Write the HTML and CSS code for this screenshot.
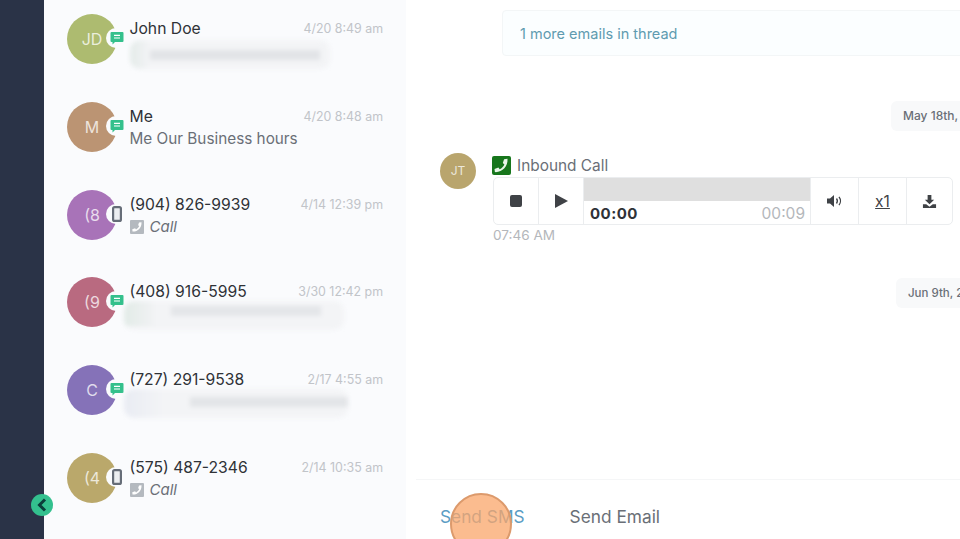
FILE: index.html
```html
<!DOCTYPE html>
<html>
  <head>
    <meta charset="utf-8" />
    <title>Conversations</title>
    <link rel="stylesheet" href="styles.css">
  </head>
  <body>
    <div class="app">
      <aside class="sidebar">
        <button class="collapse" type="button" aria-label="Collapse">
          <svg viewBox="0 0 12 14" width="12" height="14"><path d="M9 1.500 3.500 7 9 12.500" fill="none" stroke="#0b3d3a" stroke-width="3"/></svg>
        </button>
      </aside>

      <section class="list">
        <div class="row">
          <div class="avatar green">JD
            <span class="badge"><svg viewBox="0 0 14 14" width="14" height="14"><path d="M1.500 1h11a1 1 0 0 1 1 1v8a1 1 0 0 1-1 1H5l-2.500 2.500V11h-1a1 1 0 0 1-1-1V2a1 1 0 0 1 1-1z" fill="#34c08c"/><path d="M4 4.400h6M4 7h6" stroke="#fff" stroke-width="1.200"/></svg></span>
          </div>
          <div class="info">
            <div class="top"><span class="name">John Doe</span><span class="time">4/20 8:49 am</span></div>
            <div class="blur blur-a"></div>
          </div>
        </div>

        <div class="row">
          <div class="avatar brown">M
            <span class="badge"><svg viewBox="0 0 14 14" width="14" height="14"><path d="M1.500 1h11a1 1 0 0 1 1 1v8a1 1 0 0 1-1 1H5l-2.500 2.500V11h-1a1 1 0 0 1-1-1V2a1 1 0 0 1 1-1z" fill="#34c08c"/><path d="M4 4.400h6M4 7h6" stroke="#fff" stroke-width="1.200"/></svg></span>
          </div>
          <div class="info">
            <div class="top"><span class="name">Me</span><span class="time">4/20 8:48 am</span></div>
            <div class="preview">Me Our Business hours</div>
          </div>
        </div>

        <div class="row">
          <div class="avatar purple">(8
            <span class="badge"><svg viewBox="0 0 10 16" width="10" height="16"><rect x="1.100" y="1.100" width="7.800" height="13.800" rx="1.500" fill="#eceef1" stroke="#666d78" stroke-width="2.200"/></svg></span>
          </div>
          <div class="info">
            <div class="top"><span class="name">(904) 826-9939</span><span class="time">4/14 12:39 pm</span></div>
            <div class="preview call">
              <svg viewBox="0 0 14 14" width="14" height="14"><rect width="14" height="14" rx="1" fill="#b4b9bf"/><path d="M11.500 2.200c.4 5.400-3.800 9.700-9 9.400l-.2-2.400 2.800-.9.900 1.200c1.400-.7 2.600-1.900 3.300-3.400l-1.200-.9.900-2.800z" fill="#fff"/></svg>
              <em>Call</em>
            </div>
          </div>
        </div>

        <div class="row">
          <div class="avatar rose">(9
            <span class="badge"><svg viewBox="0 0 14 14" width="14" height="14"><path d="M1.500 1h11a1 1 0 0 1 1 1v8a1 1 0 0 1-1 1H5l-2.500 2.500V11h-1a1 1 0 0 1-1-1V2a1 1 0 0 1 1-1z" fill="#34c08c"/><path d="M4 4.400h6M4 7h6" stroke="#fff" stroke-width="1.200"/></svg></span>
          </div>
          <div class="info">
            <div class="top"><span class="name">(408) 916-5995</span><span class="time">3/30 12:42 pm</span></div>
            <div class="blur blur-b"></div>
          </div>
        </div>

        <div class="row">
          <div class="avatar violet">C
            <span class="badge"><svg viewBox="0 0 14 14" width="14" height="14"><path d="M1.500 1h11a1 1 0 0 1 1 1v8a1 1 0 0 1-1 1H5l-2.500 2.500V11h-1a1 1 0 0 1-1-1V2a1 1 0 0 1 1-1z" fill="#34c08c"/><path d="M4 4.400h6M4 7h6" stroke="#fff" stroke-width="1.200"/></svg></span>
          </div>
          <div class="info">
            <div class="top"><span class="name">(727) 291-9538</span><span class="time">2/17 4:55 am</span></div>
            <div class="blur blur-c"></div>
          </div>
        </div>

        <div class="row">
          <div class="avatar khaki">(4
            <span class="badge"><svg viewBox="0 0 10 16" width="10" height="16"><rect x="1.100" y="1.100" width="7.800" height="13.800" rx="1.500" fill="#eceef1" stroke="#666d78" stroke-width="2.200"/></svg></span>
          </div>
          <div class="info">
            <div class="top"><span class="name">(575) 487-2346</span><span class="time">2/14 10:35 am</span></div>
            <div class="preview call">
              <svg viewBox="0 0 14 14" width="14" height="14"><rect width="14" height="14" rx="1" fill="#b4b9bf"/><path d="M11.500 2.200c.4 5.400-3.800 9.700-9 9.400l-.2-2.400 2.800-.9.900 1.200c1.400-.7 2.600-1.900 3.300-3.400l-1.200-.9.900-2.800z" fill="#fff"/></svg>
              <em>Call</em>
            </div>
          </div>
        </div>
      </section>

      <main class="thread">
        <div class="messages">
          <div class="more-emails">1 more emails in thread</div>

          <div class="date-chip date-may">May 18th,</div>

          <div class="message">
            <div class="msg-avatar">JT</div>
            <div class="msg-body">
              <div class="msg-title">
                <svg viewBox="0 0 19 19" width="19" height="19"><rect width="19" height="19" rx="2" fill="#17761c"/><path d="M15.500 2.800c.6 7.600-5.400 13.800-12.600 13.300l-.4-3.200 3.900-1.300 1.300 1.600c2-1 3.700-2.700 4.700-4.800l-1.600-1.300 1.300-3.900z" fill="#e8f5e8"/></svg>
                <span>Inbound Call</span>
              </div>
              <div class="player">
                <div class="cell cell-stop"><span class="stop"></span></div>
                <div class="cell cell-play"><span class="play"></span></div>
                <div class="progress">
                  <div class="bar"></div>
                  <div class="times"><b>00:00</b><span>00:09</span></div>
                </div>
                <div class="cell cell-wide">
                  <svg viewBox="0 0 18 16" width="18" height="16"><path d="M1 5.500h3L8 2v12l-4-3.500H1z" fill="#3f4246"/><path d="M10.500 5.500c1 1.400 1 3.600 0 5M13 3.800c1.900 2.400 1.900 6 0 8.400" fill="none" stroke="#3f4246" stroke-width="1.300"/></svg>
                </div>
                <div class="cell cell-wide"><span class="speed">x1</span></div>
                <div class="cell cell-wide">
                  <svg viewBox="0 0 16 16" width="15" height="15"><path d="M6 1h4v5h3l-5 5-5-5h3z" fill="#3f4246"/><path d="M1 11h3.500L8 13.500 11.500 11H15v4H1z" fill="#3f4246"/></svg>
                </div>
              </div>
              <div class="msg-time">07:46 AM</div>
            </div>
          </div>

          <div class="date-chip date-jun">Jun 9th, 2</div>
        </div>

        <div class="composer">
          <a class="tab tab-active">Send SMS</a>
          <a class="tab">Send Email</a>
          <span class="click-dot"></span>
        </div>
      </main>
    </div>
  </body>
</html>
```

FILE: styles.css
```css
html,
body {
  margin: 0;
  padding: 0;
  height: 100%;
  overflow: hidden;
}

body {
  font-family: Inter, "Noto Sans", Arial, sans-serif;
  background: #fff;
  color: #2f3237;
}

.app {
  display: flex;
  height: 539px;
}

/* dark strip on the left */
.sidebar {
  position: relative;
  flex: 0 0 44px;
  background: #2a3347;
}

.collapse {
  position: absolute;
  left: 31px;
  top: 494px;
  width: 22px;
  height: 22px;
  padding: 0;
  border: none;
  border-radius: 50%;
  background: #33c08e;
  display: flex;
  align-items: center;
  justify-content: center;
}

/* conversation list */
.list {
  flex: 0 0 362px;
  background: #fafbfd;
  padding: 14px 23px 0;
  box-sizing: border-box;
}

.row {
  display: flex;
  height: 87.8px;
}

.avatar {
  position: relative;
  flex: 0 0 50px;
  width: 50px;
  height: 50px;
  border-radius: 50%;
  color: rgba(255, 255, 255, 0.75);
  font-size: 16px;
  line-height: 50px;
  text-align: center;
}

.green { background: #adbb70; }
.brown { background: #bb9473; }
.purple { background: #a873b8; }
.rose { background: #b96a80; }
.violet { background: #8572b8; }
.khaki { background: #baa86b; }

.badge {
  position: absolute;
  left: 39px;
  top: 14px;
  width: 20px;
  height: 20px;
  border-radius: 50%;
  background: #fafbfd;
  display: flex;
  align-items: center;
  justify-content: center;
}

.badge svg {
  margin-left: 2px;
}

.info {
  flex: 1;
  margin-left: 12.5px;
  min-width: 0;
}

.top {
  display: flex;
  justify-content: space-between;
  height: 25px;
  line-height: 30px;
}

.name {
  font-size: 15.7px;
  color: #2f3237;
}

.time {
  font-size: 12.4px;
  color: #c1c4c9;
}

.preview {
  font-size: 15.3px;
  line-height: 24px;
  color: #6a6f77;
}

.call {
  display: flex;
  align-items: center;
  gap: 6px;
}

.call em {
  font-size: 15px;
}

/* blurred message previews: a pale block with a darker band through it */
.blur {
  height: 29px;
  border-radius: 10px;
  filter: blur(2px);
  background-color: #f3f4f6;
  background-repeat: no-repeat;
}

.blur-a {
  width: 200px;
  margin-top: 1px;
  background-image: linear-gradient(90deg, #e4ebe9, #f3f4f6), linear-gradient(#e2e4e7, #e2e4e7);
  background-size: 20px 29px, 180px 10px;
  background-position: 0 0, 10px 10px;
}

.blur-b {
  width: 220px;
  margin: -1px 0 0 -6px;
  background-image: linear-gradient(90deg, #e2ebe7, #f1f2f4), linear-gradient(#e4e6e9, #e4e6e9);
  background-size: 30px 25px, 150px 10px;
  background-position: 0 0, 47px 5px;
}

.blur-c {
  width: 224px;
  margin: -1px 0 0 -6px;
  background-image: linear-gradient(90deg, #e9ecf3, #f3f4f6), linear-gradient(#e3e5e8, #e3e5e8);
  background-size: 40px 29px, 158px 10px;
  background-position: 0 0, 66px 8px;
}

/* right side */
.thread {
  position: relative;
  flex: 1;
  min-width: 0;
  display: flex;
  flex-direction: column;
  overflow: hidden;
}

.messages {
  flex: 1;
  padding: 10px 0 0 34px;
}

.more-emails {
  width: 600px;
  height: 46px;
  margin-left: 62px;
  padding-left: 17px;
  box-sizing: border-box;
  line-height: 46px;
  font-size: 14.5px;
  color: #5f9bb0;
  background: #fbfeff;
  border: 1px solid #f3f6f7;
  border-radius: 4px;
}

.date-chip {
  width: 110px;
  height: 30px;
  line-height: 30px;
  padding-left: 12px;
  font-size: 12px;
  font-weight: 500;
  color: #6a6f77;
  background: #f8f9fa;
  border-radius: 6px;
  white-space: nowrap;
}

.date-may {
  margin: 45px 0 0 451px;
}

.date-jun {
  margin: 35px 0 0 456px;
  font-size: 11.5px;
}

.message {
  display: flex;
  margin-top: 22px;
}

.msg-avatar {
  flex: 0 0 36px;
  height: 36px;
  margin-right: 17px;
  border-radius: 50%;
  background: #b9a56d;
  color: rgba(255, 255, 255, 0.75);
  font-size: 12px;
  line-height: 36px;
  text-align: center;
}

.msg-body {
  flex: 0 0 460px;
}

.msg-title {
  display: flex;
  align-items: center;
  gap: 6px;
  height: 24px;
  font-size: 15.4px;
  color: #6a6f77;
  margin-left: -1px;
}

.player {
  display: flex;
  height: 48px;
  box-sizing: border-box;
  border: 1px solid #ebedef;
  border-radius: 5px;
}

.cell {
  display: flex;
  align-items: center;
  justify-content: center;
  border-right: 1px solid #ebedef;
  box-sizing: border-box;
}

.cell-stop,
.cell-play {
  flex: 0 0 45px;
}

.cell-wide {
  flex: 0 0 48px;
}

.cell-wide:last-child {
  flex: 1;
  border-right: none;
}

.stop {
  width: 12px;
  height: 12px;
  border-radius: 2px;
  background: #3f4246;
}

.play {
  width: 0;
  height: 0;
  border-left: 13px solid #3f4246;
  border-top: 7.5px solid transparent;
  border-bottom: 7.5px solid transparent;
}

.progress {
  flex: 0 0 227px;
  box-sizing: border-box;
  border-right: 1px solid #ebedef;
}

.bar {
  height: 23px;
  background: #dfdfdf;
}

.times {
  display: flex;
  justify-content: space-between;
  align-items: baseline;
  padding: 3px 5px 0 6px;
  font-size: 15px;
  line-height: 20px;
}

.times b {
  color: #2f3237;
  letter-spacing: 0.5px;
}

.times span {
  font-size: 15.5px;
  color: #b4b7bb;
}

.speed {
  font-size: 15.5px;
  color: #3f4246;
  text-decoration: underline;
}

.msg-time {
  margin-top: 2px;
  font-size: 13.6px;
  line-height: 16px;
  color: #b4b7bb;
}

/* bottom tabs */
.composer {
  position: relative;
  flex: 0 0 60px;
  margin-left: 10px;
  display: flex;
  gap: 45px;
  padding: 25px 0 0 24px;
  box-sizing: border-box;
  border-top: 1px solid #f5f6f7;
}

.tab {
  font-size: 17.3px;
  line-height: 24px;
  color: #6a6f77;
}

.tab-active {
  color: #5b9dc4;
}

/* orange click marker from the screen recording */
.click-dot {
  position: absolute;
  left: 34px;
  top: 13px;
  width: 62px;
  height: 62px;
  box-sizing: border-box;
  border-radius: 50%;
  background: rgba(250, 165, 105, 0.75);
  border: 2px solid #dc9a6c;
}
```
